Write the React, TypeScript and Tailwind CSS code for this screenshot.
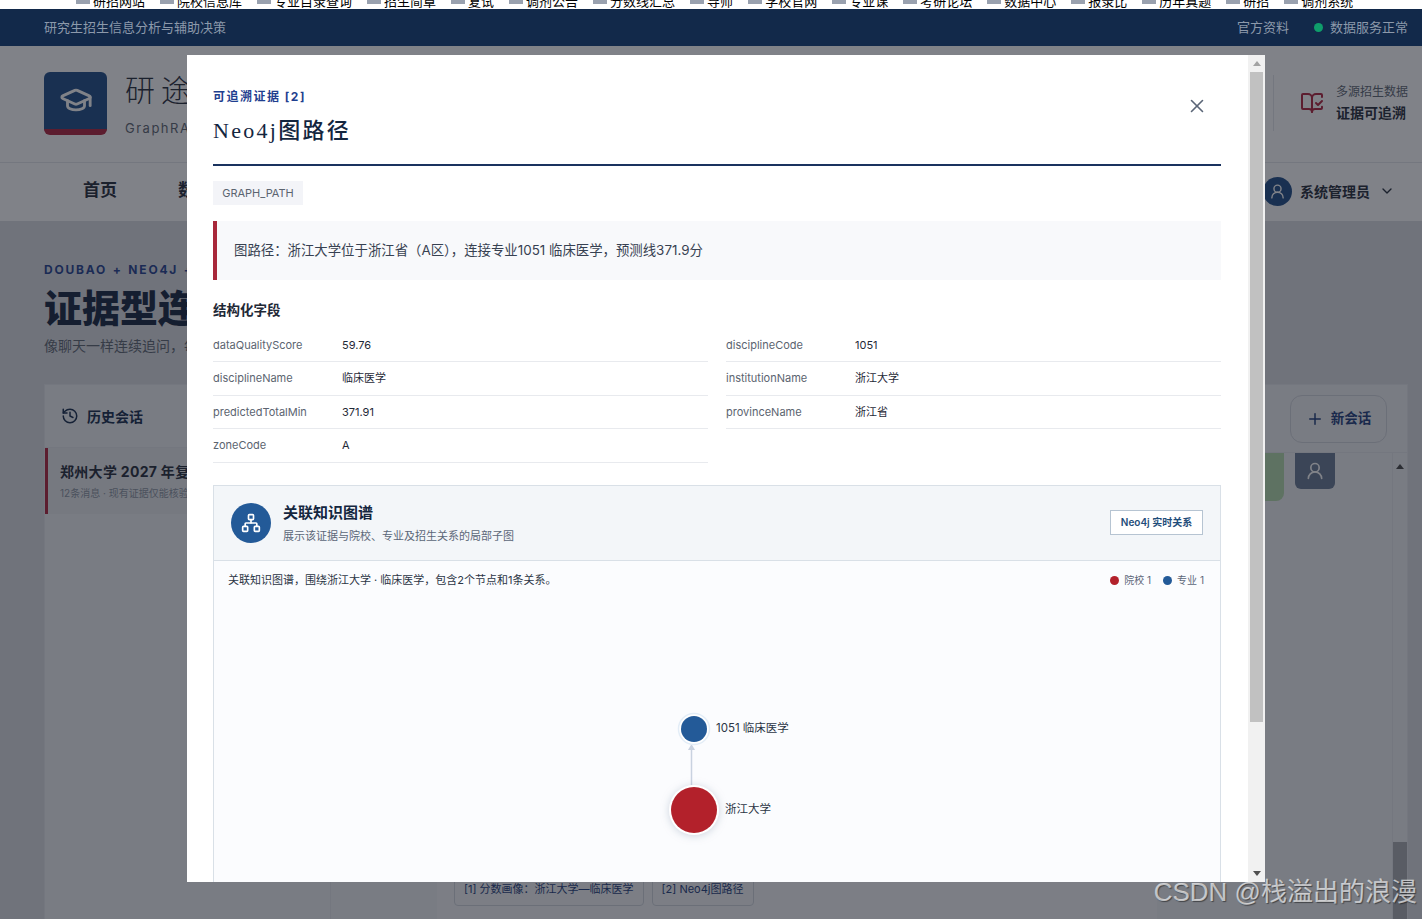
import {
  BookOpenCheck,
  ChevronDown,
  GraduationCap,
  History,
  Network,
  Plus,
  UserRound,
  X,
} from "lucide-react";

const sans = "font-['Inter','Noto_Sans_CJK_SC',sans-serif]";

const bookmarks = ["研招网站", "院校信息库", "专业目录查询", "招生简章", "复试", "调剂公告", "分数线汇总", "导师", "学校官网", "专业课", "考研论坛", "数据中心", "报录比", "历年真题", "研招", "调剂系统"];

const fields = [
  ["dataQualityScore", "59.76"],
  ["disciplineCode", "1051"],
  ["disciplineName", "临床医学"],
  ["institutionName", "浙江大学"],
  ["predictedTotalMin", "371.91"],
  ["provinceName", "浙江省"],
  ["zoneCode", "A"],
];

function TopBars() {
  return (
    <div className="relative z-50">
      <div className="h-[9px] overflow-hidden bg-white">
        <div className="-mt-[12px] flex items-end gap-[15px] pl-[76px] text-[13px] leading-[16px] text-black">
          {bookmarks.map((b) => (
            <span key={b} className="flex shrink-0 items-end gap-[3px]">
              <span className="mb-[5px] h-[16px] w-[14px] bg-gray-400" />
              <span>{b}</span>
            </span>
          ))}
        </div>
      </div>
      <div className="flex h-[37px] items-center justify-between bg-[#12294a] pl-[44px] pr-[14px] text-[13px] text-[#8c99ab]">
        <span>研究生招生信息分析与辅助决策</span>
        <div className="flex items-center gap-[25px]">
          <span>官方资料</span>
          <span className="flex items-center gap-[7px]">
            <span className="h-[9px] w-[9px] rounded-full bg-[#0f9d6b]" />
            数据服务正常
          </span>
        </div>
      </div>
    </div>
  );
}

function PageHeader() {
  return (
    <>
      <div className="flex h-[116px] items-center justify-between bg-white pb-[2px] pl-[44px] pr-[14px]">
        <div className="flex items-center gap-[18px]">
          <div className="flex h-[63px] w-[63px] items-center justify-center rounded-md border-b-[6px] border-[#b0213a] bg-[#1b4a85] text-white">
            <GraduationCap size={34} strokeWidth={2} />
          </div>
          <div className="mt-[5px]">
            <div className="font-['Liberation_Serif','Noto_Sans_CJK_SC',serif] text-[30px] font-light leading-[38px] tracking-[6px] text-[#1f2937]">研途智析</div>
            <div className="mt-[9px] text-[13px] tracking-[1.5px] text-[#5b6470]">GraphRAG 研究生招生智能分析</div>
          </div>
        </div>
        <div className="flex h-[56px] items-center gap-[12px] border-l border-gray-200 pl-[26px]">
          <BookOpenCheck size={24} className="text-[#b0213a]" />
          <div>
            <div className="text-[12px] leading-[20px] text-[#5b6470]">多源招生数据</div>
            <div className="text-[14px] font-bold leading-[22px] text-[#1f2937]">证据可追溯</div>
          </div>
        </div>
      </div>
      <div className="flex h-[59px] items-center justify-between border-t border-gray-200 bg-white pb-[2px] pl-[83px] pr-[27px]">
        <div className="flex gap-[61px] text-[17px] font-bold text-[#1f2937]">
          <span>首页</span>
          <span>数据中心</span>
        </div>
        <div className="flex items-center gap-[8px]">
          <span className="flex h-[29px] w-[29px] items-center justify-center rounded-full bg-[#1b4a85] text-white">
            <UserRound size={17} />
          </span>
          <span className="text-[14px] font-bold text-[#1f2937]">系统管理员</span>
          <ChevronDown size={16} className="ml-[1px] text-[#1f2937]" />
        </div>
      </div>
    </>
  );
}

function ChatPanel() {
  return (
    <div className="mt-[27px] flex h-[600px] border border-gray-200 bg-[#f0f1f3]">
      <aside className="w-[286px] shrink-0 border-r border-gray-200">
        <div className="flex h-[63px] items-center gap-[8px] border-b border-gray-200 pl-[16px] text-[#12294a]">
          <History size={18} />
          <span className="text-[14px] font-bold">历史会话</span>
        </div>
        <div className="h-[66px] border-l-[3px] border-[#b0213a] bg-[#e9ebee] pl-[12px] pt-[13px]">
          <div className="text-[14px] font-bold tracking-[0.3px] text-[#1f2937]">郑州大学 2027 年复试分数线</div>
          <div className="mt-[4px] text-[10px] text-[#8a93a0]">12条消息 · 现有证据仅能核验部分信息</div>
        </div>
      </aside>
      <div className="flex min-w-0 flex-1 flex-col">
        <div className="flex h-[68px] shrink-0 items-center justify-end border-b border-gray-200 pr-[20px]">
          <button className="flex h-[48px] w-[97px] items-center justify-center gap-[7px] rounded-xl border border-gray-300 text-[13.5px] font-bold text-[#1b3a7a]">
            <Plus size={18} />
            新会话
          </button>
        </div>
        <div className="flex min-h-0 flex-1">
          <div className="flex-1 overflow-hidden">
            <div className="flex justify-end gap-[11px] pr-[57px]">
              <div className="h-[48px] w-[500px] rounded-b-lg bg-[#b4dcaa]" />
              <div className="flex h-[36px] w-[40px] items-center justify-center rounded-b-md bg-[#667892] text-white">
                <UserRound size={20} />
              </div>
            </div>
            <div className="ml-[106px] mr-[235px] mt-[376px] h-[200px] bg-[#f6f7f8] pl-[17px]">
              <div className="flex gap-[8px] text-[11px] leading-[16px] text-[#1b3a7a]">
                <span className="rounded border border-gray-300 px-[9px] pb-[8px] pt-[3px]">[1] 分数画像：浙江大学—临床医学</span>
                <span className="rounded border border-gray-300 px-[9px] pb-[8px] pt-[3px]">[2] Neo4j图路径</span>
              </div>
            </div>
          </div>
          <div className="w-[15px] shrink-0 border-l border-gray-200">
            <div className="mx-auto mt-[11px] h-0 w-0 border-x-[4px] border-b-[5px] border-x-transparent border-b-[#444]" />
            <div className="mt-[373px] h-[80px] bg-[#a8abb0]" />
          </div>
        </div>
      </div>
    </div>
  );
}

function KnowledgeGraph() {
  return (
    <div className="mt-[22px] border border-[#d9e0e7] bg-[#fbfcfe]">
      <div className="flex h-[75px] items-center justify-between border-b border-[#d9e0e7] bg-[#f3f6f9] pl-[17px] pr-[17px]">
        <div className="flex items-center gap-[12px]">
          <span className="flex h-[40px] w-[40px] items-center justify-center rounded-full bg-[#235a98] text-white">
            <Network size={20} />
          </span>
          <div>
            <div className="text-[15px] font-bold leading-[24px] text-[#14263f]">关联知识图谱</div>
            <div className="mt-[2px] text-[11px] leading-[18px] text-[#5b6678]">展示该证据与院校、专业及招生关系的局部子图</div>
          </div>
        </div>
        <span className="flex h-[25px] w-[93px] items-center justify-center border border-[#b6c4d2] bg-white text-[10px] font-semibold text-[#1f4d7a]">
          Neo4j 实时关系
        </span>
      </div>
      <div className="flex h-[40px] items-center justify-between pl-[14px] pr-[16px]">
        <span className="text-[11px] text-[#2b3545]">关联知识图谱，围绕浙江大学 · 临床医学，包含2个节点和1条关系。</span>
        <div className="flex items-center gap-[4px] text-[10px] text-[#5b6678]">
          <span className="h-[9px] w-[9px] rounded-full bg-[#b3212b]" />
          <span className="ml-[1px] mr-[8px]">院校 1</span>
          <span className="h-[9px] w-[9px] rounded-full bg-[#235a98]" />
          <span className="ml-[1px]">专业 1</span>
        </div>
      </div>
      <svg width="1006" height="400" viewBox="214 601 1006 400" className="block">
        <defs>
          <filter id="glow" x="-50%" y="-50%" width="200%" height="200%">
            <feDropShadow dx="0" dy="1" stdDeviation="4" floodColor="#94a3b8" floodOpacity="0.45" />
          </filter>
        </defs>
        <line x1="691.5" y1="785" x2="691.5" y2="748" stroke="#c9d2e0" strokeWidth="1.5" />
        <path d="M691.5 744 L688 750 L695 750 Z" fill="#c9d2e0" />
        <circle cx="694" cy="729" r="15.5" fill="#fff" stroke="#e3edf7" strokeWidth="1.5" />
        <circle cx="694" cy="729" r="13" fill="#235a98" />
        <circle cx="694" cy="810" r="25" fill="#fff" filter="url(#glow)" />
        <circle cx="694" cy="810" r="23" fill="#b3212b" />
        <text x="716" y="732" fontSize="11.5" fill="#2b3545" fontFamily="Inter, 'Noto Sans CJK SC', sans-serif">1051 临床医学</text>
        <text x="725" y="813" fontSize="11.5" fill="#2b3545" fontFamily="Inter, 'Noto Sans CJK SC', sans-serif">浙江大学</text>
      </svg>
    </div>
  );
}

function EvidenceModal() {
  return (
    <div className="absolute inset-x-0 bottom-0 top-[46px] z-40 bg-[#181b26]/55 pl-[187px] pt-[9px]">
      <div className="flex h-[827px] w-[1078px] overflow-hidden bg-white">
        <div className="min-w-0 flex-1 overflow-hidden pl-[26px] pr-[27px] pt-[33px]">
          <div className="flex items-start justify-between border-b-2 border-[#1a335f] pb-[18px] pr-[13px]">
            <div>
              <div className="text-[12px] font-bold leading-[18px] tracking-[1.5px] text-[#1f3f8f]">可追溯证据 [2]</div>
              <h2 className="mt-[10px] font-['Liberation_Serif','Noto_Sans_CJK_SC',serif] text-[22px] font-medium leading-[30px] tracking-[2.3px] text-[#14263f]">Neo4j图路径</h2>
            </div>
            <X size={22} strokeWidth={1.75} className="mt-[7px] text-[#5b6678]" />
          </div>
          <div className="mt-[15px] flex h-[24px] w-[90px] items-center justify-center bg-[#f3f4f8] text-[11px] text-[#5b6470]">GRAPH_PATH</div>
          <div className="mt-[16px] flex h-[59px] items-center border-l-4 border-[#a8283a] bg-[#f8f9fb] pl-[17px] text-[13.4px] text-[#374151]">
            图路径：浙江大学位于浙江省（A区），连接专业1051 临床医学，预测线371.9分
          </div>
          <h3 className="mt-[20px] text-[13.5px] font-bold leading-[20px] text-[#1f2937]">结构化字段</h3>
          <div className="mt-[9px] grid grid-cols-2 gap-x-[18px]">
            {fields.map(([k, v]) => (
              <div key={k} className="grid h-[33.4px] grid-cols-[129px_1fr] items-center border-b border-[#e8eaee] text-[11px]">
                <span className="text-[#5b6470]">{k}</span>
                <span className="text-[#1f2937]">{v}</span>
              </div>
            ))}
          </div>
          <KnowledgeGraph />
        </div>
        <div className="flex w-[17px] shrink-0 flex-col bg-[#f1f1f1]">
          <div className="flex h-[17px] items-center justify-center">
            <span className="h-0 w-0 border-x-[4px] border-b-[5px] border-x-transparent border-b-[#a3a3a3]" />
          </div>
          <div className="mx-auto h-[650px] w-[13px] bg-[#c1c1c1]" />
          <div className="flex-1" />
          <div className="flex h-[17px] items-center justify-center">
            <span className="h-0 w-0 border-x-[4px] border-t-[5px] border-x-transparent border-t-[#505050]" />
          </div>
        </div>
      </div>
    </div>
  );
}

export default function App() {
  return (
    <div className={`relative h-[919px] w-[1422px] overflow-hidden bg-[#dcdee2] ${sans}`}>
      <TopBars />
      <PageHeader />
      <main className="pl-[44px] pr-[14px] pt-[41px]">
        <div className="text-[12px] font-bold leading-[16px] tracking-[1.8px] text-[#1f3f8f] [word-spacing:1px]">DOUBAO + NEO4J + GRAPHRAG</div>
        <h1 className="mt-[5px] text-[38px] font-black leading-[50px] text-[#12233d]">证据型连续问答</h1>
        <p className="mt-[2px] text-[14px] leading-[22px] text-[#5b6470]">像聊天一样连续追问，每个回答都有证据可查</p>
        <ChatPanel />
      </main>
      <EvidenceModal />
      <div className="absolute bottom-[11px] right-[5px] z-50 font-['Liberation_Sans','Noto_Sans_CJK_SC',sans-serif] text-[26px] leading-[32px] text-white/65 [text-shadow:1px_1px_1px_rgba(0,0,0,0.45)]">
        CSDN @栈溢出的浪漫
      </div>
    </div>
  );
}
